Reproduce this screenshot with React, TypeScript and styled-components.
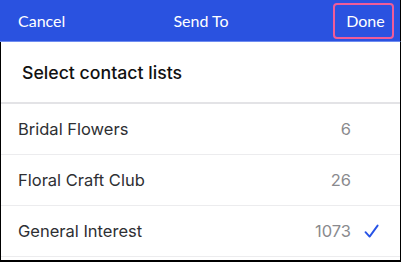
import { createGlobalStyle } from "styled-components";
import styled from "styled-components";

const GlobalStyle = createGlobalStyle`
  html, body {
    margin: 0;
    padding: 0;
    background: #ffffff;
  }
  body {
    font-family: "Inter", "Liberation Sans", sans-serif;
  }
`;

const lists = [
  { name: "Bridal Flowers", count: 6, selected: false },
  { name: "Floral Craft Club", count: 26, selected: false },
  { name: "General Interest", count: 1073, selected: true },
];

function App() {
  return (
    <>
      <GlobalStyle />
      <Frame>
        <Header>
          <HeaderButton>Cancel</HeaderButton>
          <HeaderTitle>Send To</HeaderTitle>
          <DoneButton>Done</DoneButton>
        </Header>
        <Body>
          <SectionTitle>Select contact lists</SectionTitle>
          {lists.map((list) => (
            <Row key={list.name}>
              <RowName>{list.name}</RowName>
              <RowCount>{list.count}</RowCount>
              <CheckSlot>
                {list.selected && (
                  <svg width="15" height="15" viewBox="0 0 15 15">
                    <path
                      d="M1.5 8.2 L5.6 12.6 L13.6 1.6"
                      fill="none"
                      stroke="#2753e6"
                      strokeWidth="1.9"
                      strokeLinecap="round"
                      strokeLinejoin="round"
                    />
                  </svg>
                )}
              </CheckSlot>
            </Row>
          ))}
        </Body>
      </Frame>
    </>
  );
}

const Frame = styled.div`
  width: 401px;
  height: 262px;
  box-sizing: border-box;
  display: flex;
  flex-direction: column;
  overflow: hidden;
`;

const Header = styled.div`
  height: 41px;
  flex: 0 0 auto;
  background: #2a52e0;
  border-bottom: 1px solid #6e8cf0;
  border-right: 1px solid #000;
  display: flex;
  align-items: center;
  justify-content: space-between;
  padding: 0 6px 0 18px;
  position: relative;
  font-family: "Lato", "Open Sans", sans-serif;
  color: #ffffff;
  font-size: 16px;
`;

const HeaderButton = styled.span`
  line-height: 1;
`;

const HeaderTitle = styled.span`
  position: absolute;
  left: 0;
  right: 0;
  text-align: center;
  pointer-events: none;
  margin-left: 2px;
`;

const DoneButton = styled.span`
  box-sizing: border-box;
  width: 61px;
  height: 36px;
  border: 2px solid #ef5c98;
  border-radius: 4px;
  display: flex;
  align-items: center;
  justify-content: center;
  padding-left: 4px;
`;

const Body = styled.div`
  flex: 1;
  border-left: 1px solid #000;
  border-right: 1px solid #000;
  border-bottom: 2px solid #000;
  display: flex;
  flex-direction: column;
`;

const SectionTitle = styled.div`
  height: 60px;
  flex: 0 0 auto;
  border-bottom: 2px solid #e3e3e6;
  display: flex;
  align-items: center;
  padding-left: 21px;
  font-size: 17.7px;
  font-weight: 500;
  color: #111111;
`;

const Row = styled.div`
  height: 50px;
  flex: 0 0 auto;
  border-bottom: 1px solid #ececee;
  display: flex;
  align-items: center;
  padding-left: 17px;
  padding-right: 21px;
`;

const RowName = styled.span`
  flex: 1;
  font-size: 16.5px;
  color: #2e2f33;
`;

const RowCount = styled.span`
  font-size: 16.5px;
  color: #8a8a8e;
`;

const CheckSlot = styled.span`
  width: 15px;
  height: 15px;
  margin-left: 13px;
  display: flex;
  align-items: center;
  justify-content: center;
`;

export default App;
